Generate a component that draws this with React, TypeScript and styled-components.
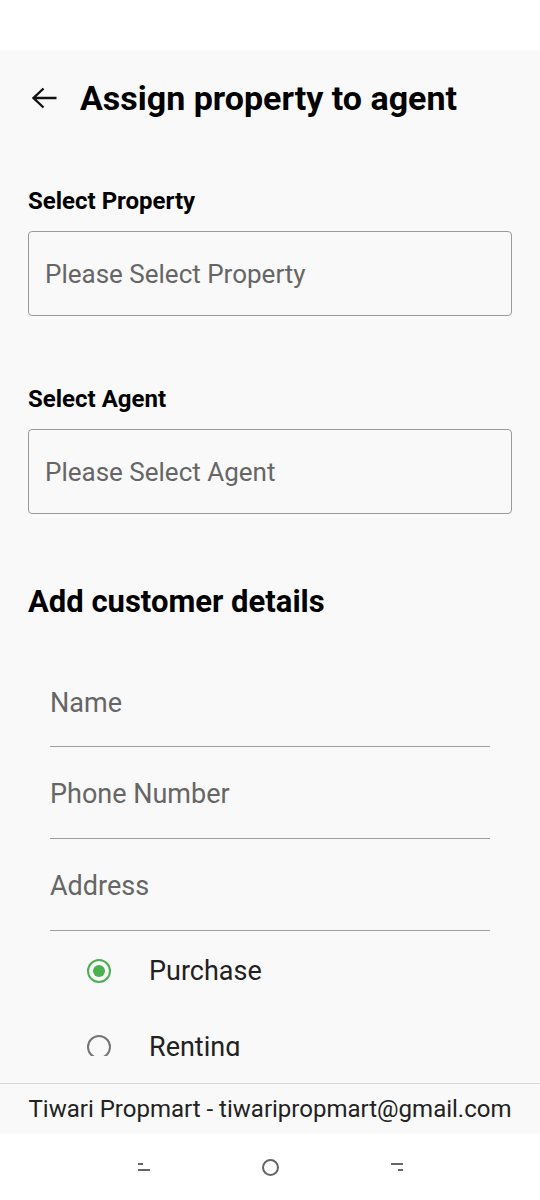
import styled, { createGlobalStyle } from 'styled-components'

const GlobalStyle = createGlobalStyle`
  html, body {
    margin: 0;
    padding: 0;
    background: #ffffff;
  }
  body {
    font-family: Roboto, "Noto Sans", sans-serif;
  }
`

export default function App() {
  return (
    <Screen>
      <GlobalStyle />
      <StatusBar />
      <Main>
        <Header>
          <BackButton aria-label="back">
            <svg width="26" height="22" viewBox="0 0 26 22" fill="none">
              <path d="M1.5 11H24.5M11.5 1.5L1.5 11L11.5 20.5" stroke="#111" strokeWidth="2.4" />
            </svg>
          </BackButton>
          <Title>Assign property to agent</Title>
        </Header>
        <Scroll>
          <Label>Select Property</Label>
          <SelectBox>Please Select Property</SelectBox>
          <Label $top={71}>Select Agent</Label>
          <SelectBox>Please Select Agent</SelectBox>
          <SectionTitle>Add customer details</SectionTitle>
          <Fields>
            <UnderlineField>Name</UnderlineField>
            <UnderlineField>Phone Number</UnderlineField>
            <UnderlineField>Address</UnderlineField>
          </Fields>
          <RadioGroup>
            <RadioRow>
              <Radio $checked />
              <RadioText>Purchase</RadioText>
            </RadioRow>
            <RadioRow>
              <Radio />
              <RadioText>Renting</RadioText>
            </RadioRow>
          </RadioGroup>
        </Scroll>
        <Footer>Tiwari Propmart - tiwaripropmart@gmail.com</Footer>
      </Main>
      <NavBar>
        <svg width="14" height="10" viewBox="0 0 14 10">
          <path d="M1 2H6M1 8H13" stroke="#666" strokeWidth="2" />
        </svg>
        <NavHome />
        <svg width="14" height="10" viewBox="0 0 14 10">
          <path d="M1 2H13M8 8H13" stroke="#666" strokeWidth="2" />
        </svg>
      </NavBar>
    </Screen>
  )
}

const Screen = styled.div`
  width: 540px;
  height: 1200px;
  display: flex;
  flex-direction: column;
  overflow: hidden;
`

const StatusBar = styled.div`
  height: 50px;
  background: #ffffff;
  flex-shrink: 0;
`

const Main = styled.div`
  flex: 1;
  display: flex;
  flex-direction: column;
  background: #f9f9f9;
  min-height: 0;
`

const Header = styled.div`
  height: 96px;
  display: flex;
  align-items: center;
  padding-left: 32px;
  flex-shrink: 0;
`

const BackButton = styled.div`
  width: 48px;
  display: flex;
  align-items: center;
`

const Title = styled.h1`
  margin: 0;
  font-size: 34px;
  font-weight: 700;
  color: #000;
`

const Scroll = styled.div`
  flex: 1;
  min-height: 0;
  overflow: hidden;
  padding: 0 28px;
  margin-bottom: 27px;
`

const Label = styled.div<{ $top?: number }>`
  margin-top: ${p => p.$top ?? 43}px;
  font-size: 24px;
  line-height: 24px;
  font-weight: 700;
  color: #000;
`

const SelectBox = styled.div`
  margin-top: 18px;
  height: 85px;
  box-sizing: border-box;
  border: 1.5px solid #9a9a9a;
  border-radius: 4px;
  display: flex;
  align-items: center;
  padding-left: 16px;
  font-size: 26px;
  color: #666;
`

const SectionTitle = styled.h2`
  margin: 72px 0 0;
  font-size: 31px;
  line-height: 32px;
  font-weight: 700;
  color: #000;
`

const Fields = styled.div`
  margin-top: 69px;
  padding: 0 22px;
  display: flex;
  flex-direction: column;
`

const UnderlineField = styled.div`
  height: 92px;
  box-sizing: border-box;
  border-bottom: 1.5px solid #9e9e9e;
  font-size: 27px;
  color: #666;
  &:first-child {
    height: 60px;
  }
  &:not(:first-child) {
    display: flex;
    align-items: center;
    padding-top: 2px;
  }
`

const RadioGroup = styled.div`
  display: flex;
  flex-direction: column;
`

const RadioRow = styled.div`
  height: 72px;
  display: flex;
  align-items: center;
  padding-left: 59px;
  &:first-child {
    height: 80px;
  }
`

const Radio = styled.span<{ $checked?: boolean }>`
  width: 24px;
  height: 24px;
  box-sizing: border-box;
  border-radius: 50%;
  border: 2.5px solid ${p => (p.$checked ? '#4caf50' : '#757575')};
  display: flex;
  align-items: center;
  justify-content: center;
  &::after {
    content: '';
    display: ${p => (p.$checked ? 'block' : 'none')};
    width: 12px;
    height: 12px;
    border-radius: 50%;
    background: #4caf50;
  }
`

const RadioText = styled.span`
  margin-left: 38px;
  font-size: 27px;
  color: #212121;
`

const Footer = styled.div`
  height: 51px;
  box-sizing: border-box;
  border-top: 1.5px solid #d6d6d6;
  display: flex;
  align-items: center;
  justify-content: center;
  font-size: 24px;
  color: #222;
  flex-shrink: 0;
`

const NavBar = styled.div`
  height: 66px;
  background: #ffffff;
  display: flex;
  align-items: center;
  justify-content: center;
  gap: 111px;
  flex-shrink: 0;
`

const NavHome = styled.span`
  width: 17px;
  height: 17px;
  box-sizing: border-box;
  border: 2px solid #666;
  border-radius: 50%;
`
